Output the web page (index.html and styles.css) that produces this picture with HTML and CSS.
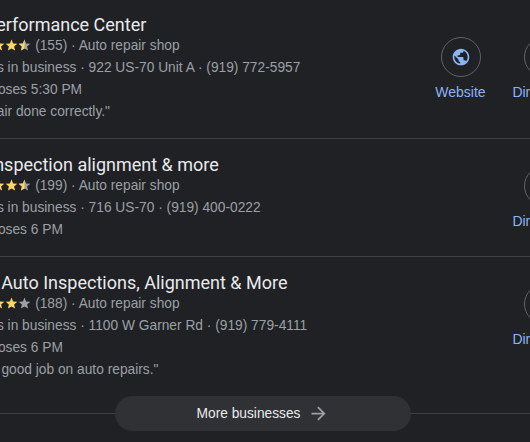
FILE: index.html
```html
<!DOCTYPE html>
<html lang="en">
<head>
<meta charset="utf-8">
<title>Businesses</title>
<link rel="stylesheet" href="styles.css">
</head>
<body>
<main class="list">
  <section class="row">
    <div class="info">
      <h3 class="title">Auto Performance Center</h3>
      <div class="line rating"><span>4.5</span>
        <svg class="stars" viewBox="0 0 65 13"><use href="#s" x="0" class="on"/><use href="#s" x="13" class="on"/><use href="#s" x="26" class="on"/><use href="#s" x="39" class="on"/><use href="#s" x="52" class="off"/><use href="#h" x="52" class="on"/></svg>
        <span>(155) · Auto repair shop</span></div>
      <div class="line">10+ years in business · 922 US-70 Unit A · (919) 772-5957</div>
      <div class="line">Open<span class="dot"> · </span>Closes 5:30 PM</div>
      <div class="line">"Had repair done correctly."</div>
    </div>
    <div class="actions">
      <a class="action"><span class="circle"><svg viewBox="0 0 24 24" class="icon"><path d="M12 2C6.48 2 2 6.48 2 12s4.48 10 10 10 10-4.48 10-10S17.52 2 12 2zm-1 17.93c-3.95-.49-7-3.85-7-7.93 0-.62.08-1.21.21-1.79L9 15v1c0 1.1.9 2 2 2v1.93zm6.9-2.54c-.26-.81-1-1.39-1.9-1.39h-1v-3c0-.55-.45-1-1-1H8v-2h2c.55 0 1-.45 1-1V7h2c1.1 0 2-.9 2-2v-.41c2.93 1.19 5 4.06 5 7.41 0 2.08-.8 3.97-2.1 5.39z"/></svg></span>Website</a>
      <a class="action"><span class="circle"></span>Directions</a>
    </div>
  </section>
  <section class="row">
    <div class="info">
      <h3 class="title">State Inspection alignment &amp; more</h3>
      <div class="line rating"><span>4.5</span>
        <svg class="stars" viewBox="0 0 65 13"><use href="#s" x="0" class="on"/><use href="#s" x="13" class="on"/><use href="#s" x="26" class="on"/><use href="#s" x="39" class="on"/><use href="#s" x="52" class="off"/><use href="#h" x="52" class="on"/></svg>
        <span>(199) · Auto repair shop</span></div>
      <div class="line">10+ years in business · 716 US-70 · (919) 400-0222</div>
      <div class="line">Open<span class="dot"> · </span>Closes 6 PM</div>
    </div>
    <div class="actions">
      <a class="action"><span class="circle"></span>Directions</a>
    </div>
  </section>
  <section class="row row-last">
    <div class="info">
      <h3 class="title">Garner Auto Inspections, Alignment &amp; More</h3>
      <div class="line rating"><span>4.0</span>
        <svg class="stars" viewBox="0 0 65 13"><use href="#s" x="0" class="on"/><use href="#s" x="13" class="on"/><use href="#s" x="26" class="on"/><use href="#s" x="39" class="on"/><use href="#s" x="52" class="off"/></svg>
        <span>(188) · Auto repair shop</span></div>
      <div class="line">10+ years in business · 1100 W Garner Rd · (919) 779-4111</div>
      <div class="line">Open<span class="dot"> · </span>Closes 6 PM</div>
      <div class="line">"They do good job on auto repairs."</div>
    </div>
    <div class="actions">
      <a class="action"><span class="circle"></span>Directions</a>
    </div>
  </section>
</main>
<footer class="more">
  <span class="rule rule-left"></span>
  <a class="more-button">More businesses
    <svg viewBox="0 0 24 24" class="arrow"><path d="M12 4l-1.41 1.41L16.17 11H4v2h12.17l-5.58 5.59L12 20l8-8z"/></svg>
  </a>
  <span class="rule rule-right"></span>
</footer>
<svg class="defs" width="0" height="0">
  <defs>
    <path id="s" d="M6.5 0.6l1.6 3.9 4.2.3-3.2 2.7 1 4.1-3.6-2.2-3.6 2.2 1-4.1L.7 4.8l4.2-.3z"/>
    <path id="h" d="M6.5 0.6v8.8l-3.6 2.2 1-4.1L.7 4.8l4.2-.3z"/>
  </defs>
</svg>
</body>
</html>
```

FILE: styles.css
```css
html, body {
  margin: 0;
  padding: 0;
  width: 530px;
  height: 442px;
  overflow: hidden;
  background: #202124;
  font-family: "Liberation Sans", Arial, sans-serif;
  color: #9aa0a6;
}
.list {
  width: 642px;
  margin: -1px 0 0 -57px;
}
.row {
  display: flex;
  align-items: center;
  justify-content: space-between;
  padding: 15px 0;
  border-bottom: 1px solid #3c4043;
}
.row-last {
  border-bottom: 0;
  padding-bottom: 15px;
}
.row-last .actions {
  padding-bottom: 21px;
}
.info {
  flex: 1;
  min-width: 0;
}
.title {
  margin: 0;
  font: 400 18px/21px Roboto, "Liberation Sans", sans-serif;
  color: #e8eaed;
  white-space: nowrap;
}
.line {
  font-size: 13.75px;
  line-height: 22px;
  white-space: nowrap;
}
.rating {
  display: flex;
  align-items: center;
  gap: 4px;
  line-height: 21px;
  margin-bottom: 1px;
}
.dot {
  letter-spacing: -1.3px;
}
.stars {
  width: 65px;
  height: 13px;
}
.on {
  fill: #fdd663;
}
.off {
  fill: #9aa0a6;
}
.actions {
  display: flex;
}
.action {
  display: flex;
  flex-direction: column;
  align-items: center;
  gap: 6px;
  width: 83px;
  font-size: 14px;
  line-height: 18px;
  color: #8ab4f8;
}
.circle {
  display: flex;
  align-items: center;
  justify-content: center;
  box-sizing: border-box;
  width: 40px;
  height: 40px;
  border: 1px solid #5f6368;
  border-radius: 50%;
}
.icon {
  width: 20px;
  height: 20px;
  fill: #8ab4f8;
}
.more {
  display: flex;
  align-items: center;
}
.rule {
  height: 1px;
  background: #3c4043;
}
.rule-left {
  width: 115px;
}
.rule-right {
  flex: 1;
}
.more-button {
  display: flex;
  align-items: center;
  justify-content: center;
  gap: 8px;
  width: 296px;
  height: 35px;
  border-radius: 18px;
  background: #303134;
  color: #e8eaed;
  font-size: 13.75px;
}
.arrow {
  width: 21px;
  height: 21px;
  fill: #9aa0a6;
}
.defs {
  display: block;
}
```
